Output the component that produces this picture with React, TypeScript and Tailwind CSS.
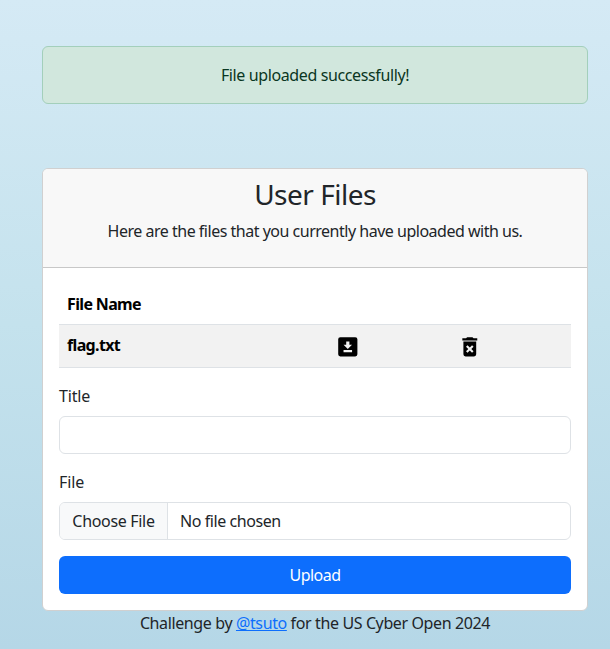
export default function App() {
  return (
    <div className="h-[649px] bg-linear-to-b from-[#d5eaf5] via-[#c4e2ed] to-[#b5d7e7] pl-[42px] pr-[22px] pt-[46px] font-['Noto_Sans',sans-serif] text-base leading-6 tracking-[-0.38px] text-[#212529]">
      <div className="flex h-[58px] items-center justify-center rounded-md border border-[#a3cfbb] bg-[#d1e7dd] text-[#0a3622]">
        File uploaded successfully!
      </div>
      <main className="mt-16 h-[443px] overflow-hidden rounded-md border border-[#d0d0d0] bg-white">
        <header className="flex h-[99px] flex-col items-center border-b border-[#c8c8c8] bg-[#f8f8f8] pt-2">
          <h1 className="text-[28px] leading-[34px] tracking-[-0.5px]">User Files</h1>
          <p className="mt-2 tracking-[-0.49px]">Here are the files that you currently have uploaded with us.</p>
        </header>
        <div className="px-4 pt-4">
          <div className="h-[41px] border-b border-[#dee2e6] p-2 font-bold tracking-[-0.65px] text-black">File Name</div>
          <div className="flex h-[43px] items-start border-b border-[#dee2e6] bg-[#f2f2f2] pl-2 pt-2 text-black">
            <span className="w-[268px] font-bold tracking-[-0.65px]">flag.txt</span>
            <svg className="mt-px size-[25.6px]" viewBox="0 0 24 24" fill="currentColor">
              <path d="M5 3h14a2 2 0 0 1 2 2v14a2 2 0 0 1-2 2H5a2 2 0 0 1-2-2V5a2 2 0 0 1 2-2m3 14h8v-2H8v2m8-7h-2.500V7h-3v3H8l4 4 4-4Z" />
            </svg>
            <svg className="mt-px ml-[96.4px] size-[25.6px]" viewBox="0 0 24 24" fill="currentColor">
              <path d="M6 19a2 2 0 0 0 2 2h8a2 2 0 0 0 2-2V7H6v12m2.460-7.120 1.410-1.410L12 12.590l2.120-2.120 1.410 1.410L13.410 14l2.120 2.120-1.410 1.410L12 15.410l-2.120 2.120-1.410-1.410L10.590 14l-2.130-2.120M15.500 4l-1-1h-5l-1 1H5v2h14V4h-3.500Z" />
            </svg>
          </div>
          <label htmlFor="title" className="mt-4 block tracking-[-0.15px]">Title</label>
          <input id="title" className="mt-2 block h-[38px] w-full rounded-md border border-[#dee2e6] bg-white px-3 outline-none" />
          <div className="mt-4 tracking-[-0.1px]">File</div>
          <div className="mt-2 flex h-[38px] overflow-hidden rounded-md border border-[#dee2e6]">
            <button className="w-[108px] border-r border-[#dee2e6] bg-[#f8f9fa] tracking-[-0.32px]">Choose File</button>
            <span className="pl-3 pt-1.5 tracking-[-0.43px]">No file chosen</span>
          </div>
          <button className="mt-4 block h-[38px] w-full rounded-md bg-[#0d6efd] tracking-[-0.55px] text-white">Upload</button>
        </div>
      </main>
      <footer className="text-center">Challenge by <a className="text-[#0d6efd] underline">@tsuto</a> for the US Cyber Open 2024</footer>
    </div>
  );
}
